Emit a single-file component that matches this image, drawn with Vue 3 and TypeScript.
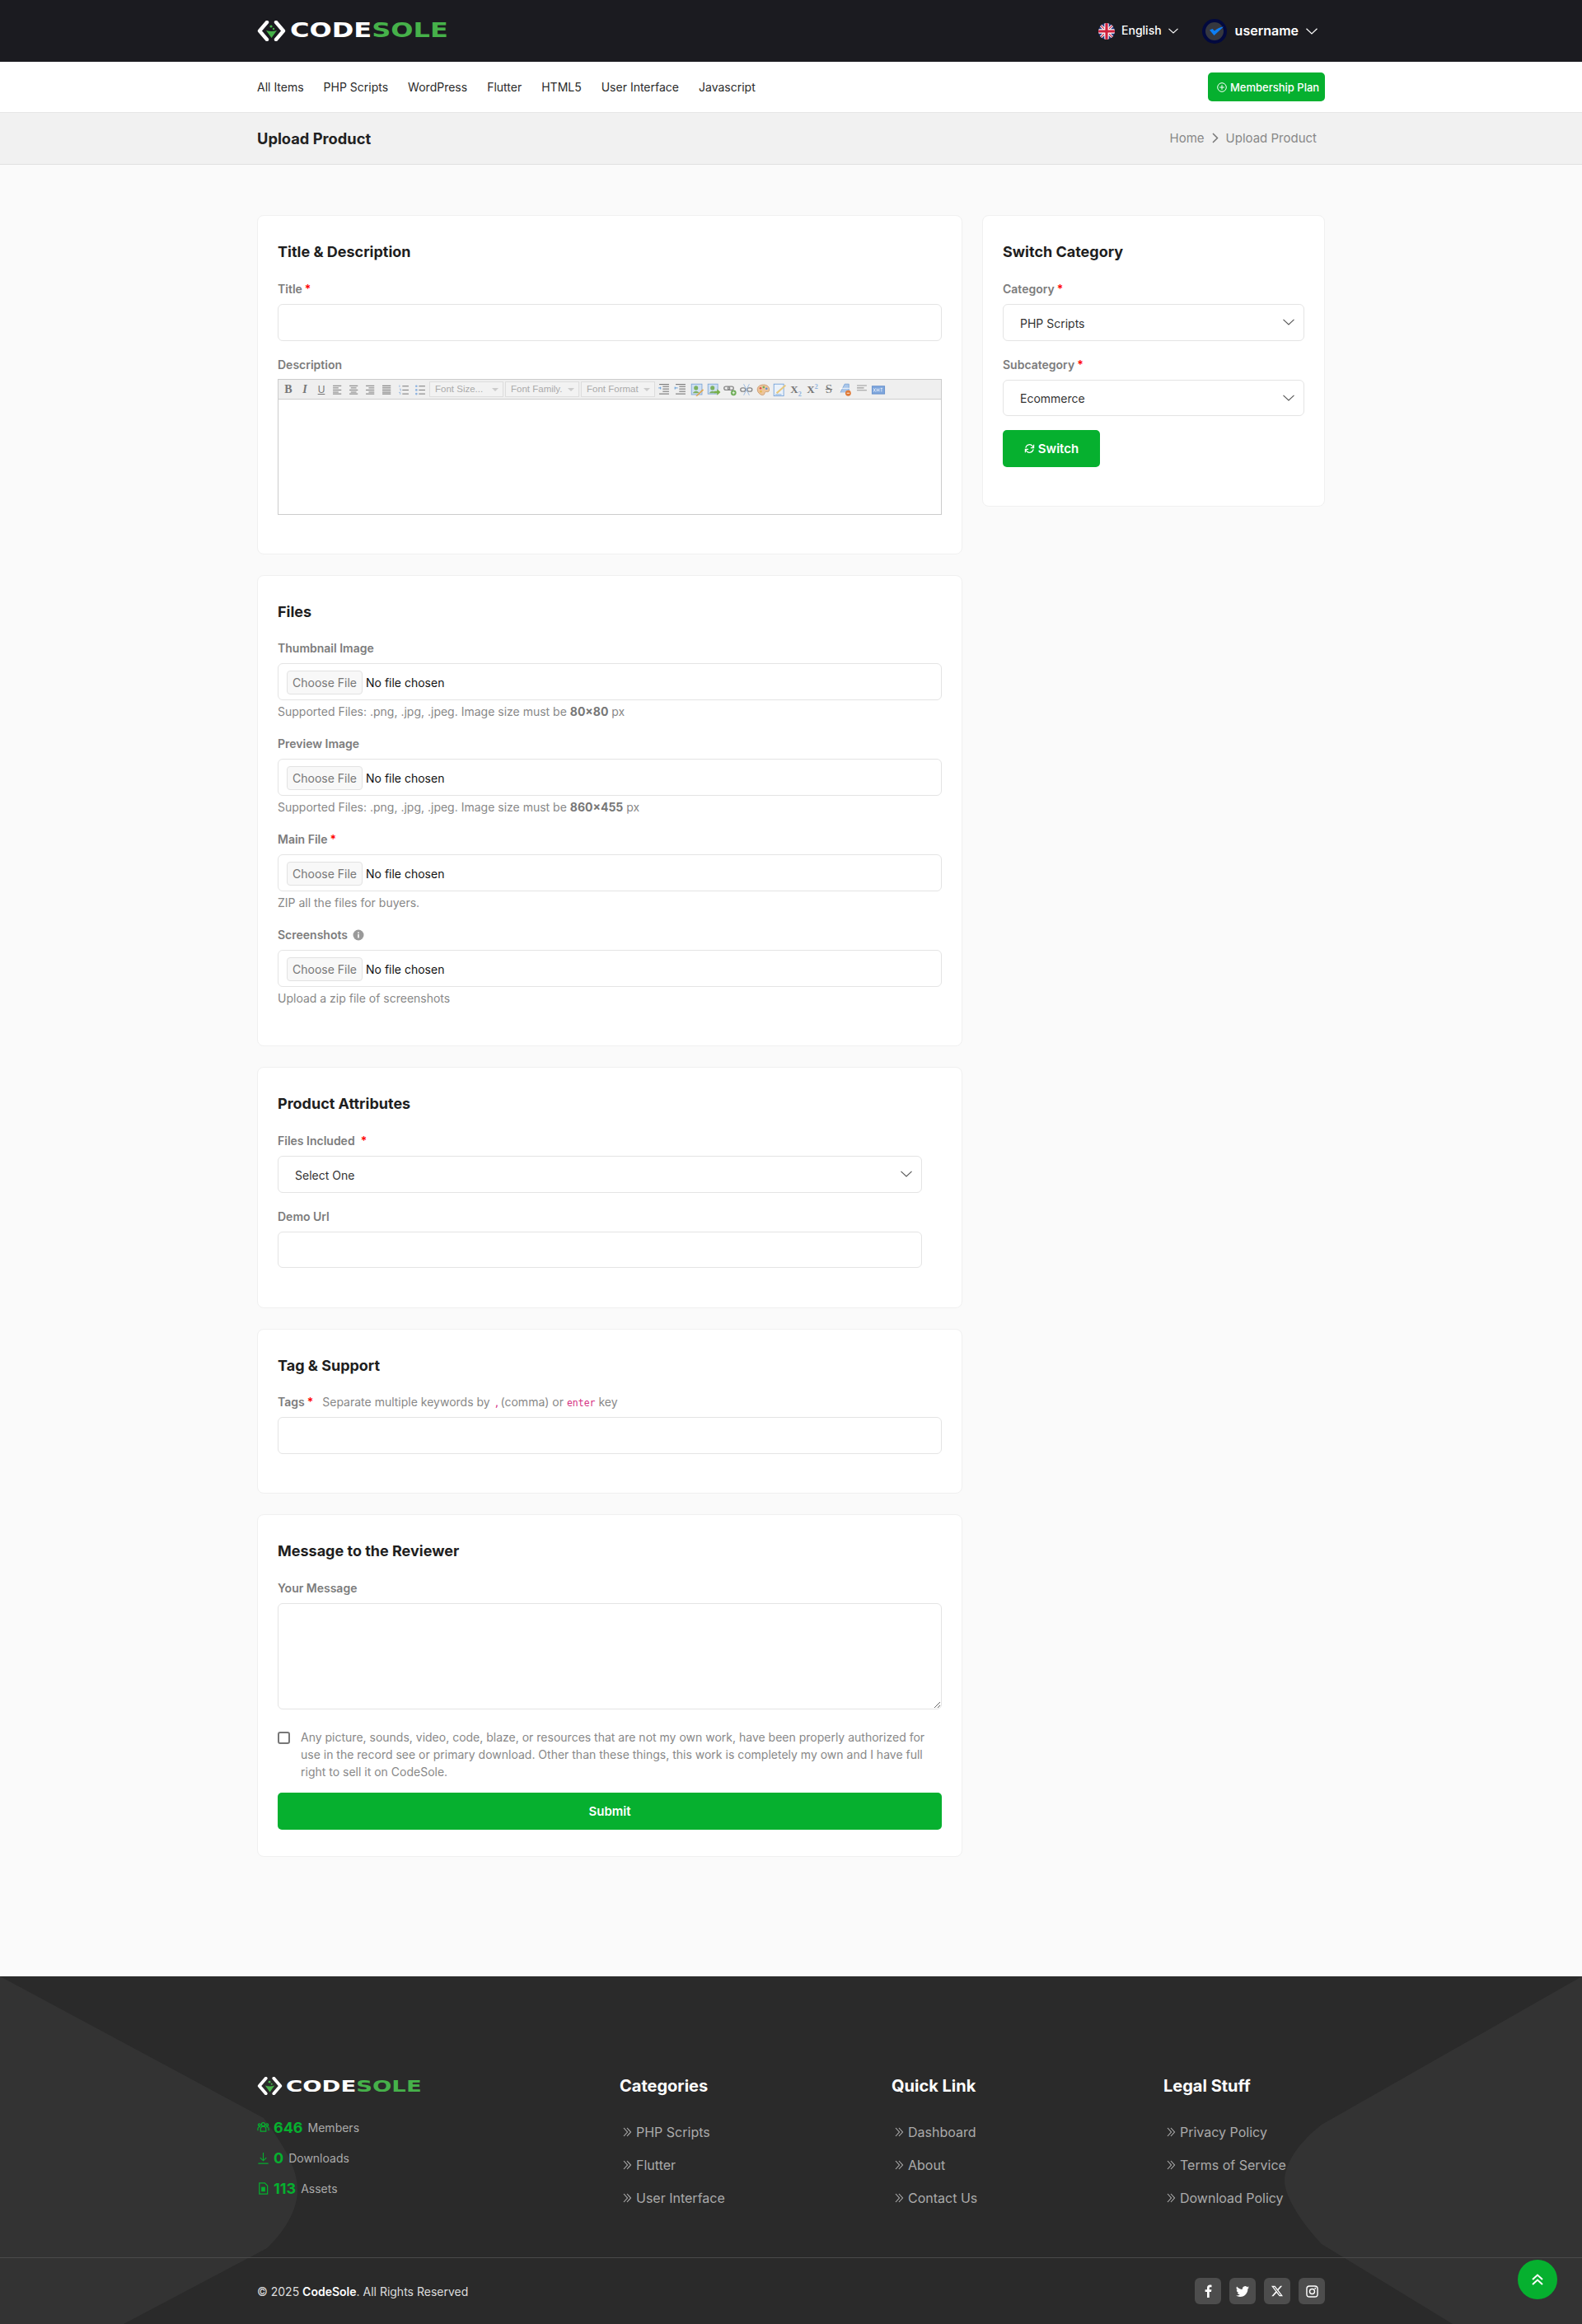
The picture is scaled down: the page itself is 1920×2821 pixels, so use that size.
<script setup lang="ts">
const navItems: string[] = ['All Items', 'PHP Scripts', 'WordPress', 'Flutter', 'HTML5', 'User Interface', 'Javascript']

interface FileField {
  label: string
  required?: boolean
  info?: boolean
  help: string
  bold?: string
  tail?: string
}
const fileFields: FileField[] = [
  { label: 'Thumbnail Image', help: 'Supported Files: .png, .jpg, .jpeg. Image size must be ', bold: '80×80', tail: ' px' },
  { label: 'Preview Image', help: 'Supported Files: .png, .jpg, .jpeg. Image size must be ', bold: '860×455', tail: ' px' },
  { label: 'Main File', required: true, help: 'ZIP all the files for buyers.' },
  { label: 'Screenshots', info: true, help: 'Upload a zip file of screenshots' },
]

const footerCols = [
  { title: 'Categories', links: ['PHP Scripts', 'Flutter', 'User Interface'] },
  { title: 'Quick Link', links: ['Dashboard', 'About', 'Contact Us'] },
  { title: 'Legal Stuff', links: ['Privacy Policy', 'Terms of Service', 'Download Policy'] },
]
</script>

<template>
  <div class="page">
    <header class="topbar">
      <div class="wrap topbar-in">
        <div class="logo">
          <svg class="logo-mark" viewBox="0 0 35 25" width="35" height="25">
            <path d="M12 2 L3 12.5 L12 23" fill="none" stroke="#fff" stroke-width="4.4" stroke-linejoin="round" stroke-linecap="round" />
            <path d="M23 2 L32 12.5 L23 23" fill="none" stroke="#fff" stroke-width="4.4" stroke-linejoin="round" stroke-linecap="round" />
            <path d="M11 12 Q17.5 14 24 12 L17.5 21 Z" fill="#46b14a" />
            <circle cx="17" cy="7" r="1.6" fill="#46b14a" />
            <circle cx="20" cy="10" r="1.2" fill="#46b14a" />
          </svg>
          <span class="logo-text"><span>CODE</span><span class="sole">SOLE</span></span>
        </div>
        <div class="top-right">
          <div class="lang">
            <svg class="flag" viewBox="0 0 20 20" width="20" height="20">
              <defs><clipPath id="flagclip"><circle cx="10" cy="10" r="10" /></clipPath></defs>
              <g clip-path="url(#flagclip)">
                <rect width="20" height="20" fill="#27387f" />
                <path d="M0 0 L20 20 M20 0 L0 20" stroke="#fff" stroke-width="3.2" />
                <path d="M0 0 L20 20 M20 0 L0 20" stroke="#cf1f3c" stroke-width="1.2" />
                <path d="M10 0 V20 M0 10 H20" stroke="#fff" stroke-width="5.4" />
                <path d="M10 0 V20 M0 10 H20" stroke="#cf1f3c" stroke-width="3.2" />
              </g>
            </svg>
            <span class="lang-text">English</span>
            <svg class="chev" viewBox="0 0 12 7" width="12" height="7"><path d="M.5.8 6 6 11.5.8" fill="none" stroke="#fff" stroke-width="1.1" /></svg>
          </div>
          <div class="user">
            <svg viewBox="0 0 30 30" width="30" height="30">
              <circle cx="15" cy="15" r="15" fill="#02093f" />
              <circle cx="15" cy="15" r="11" fill="#35373f" />
              <path d="M9 13.5 L14.5 20 L26 9.5 Q20 10 15 14.5 L12.5 12 Z" fill="#0d7ef5" />
            </svg>
            <span class="username">username</span>
            <svg class="chev" viewBox="0 0 14 8" width="14" height="8"><path d="M.5.8 7 7 13.5.8" fill="none" stroke="#fff" stroke-width="1.2" /></svg>
          </div>
        </div>
      </div>
    </header>

    <nav class="navbar">
      <div class="wrap navbar-in">
        <ul class="nav-list">
          <li v-for="n in navItems" :key="n">{{ n }}</li>
        </ul>
        <button class="plan-btn" type="button">
          <svg viewBox="0 0 12 12" width="12" height="12">
            <circle cx="6" cy="6" r="5.3" fill="none" stroke="#fff" stroke-width="1" />
            <path d="M6 3.2 V8.8 M3.2 6 H8.8" stroke="#fff" stroke-width="1" />
          </svg>
          <span>Membership Plan</span>
        </button>
      </div>
    </nav>

    <div class="crumbbar">
      <div class="wrap crumb-in">
        <h1 class="page-title">Upload Product</h1>
        <div class="crumbs">
          <span>Home</span>
          <svg viewBox="0 0 8 13" width="8" height="13"><path d="M1 1 L6.5 6.5 L1 12" fill="none" stroke="#777" stroke-width="1.5" /></svg>
          <span>Upload Product</span>
        </div>
      </div>
    </div>

    <main class="main">
      <div class="wrap layout">
        <div class="col-left">
          <section class="card c1">
            <h2 class="card-title">Title &amp; Description</h2>
            <div class="group">
              <label class="lbl">Title<i class="req">*</i></label>
              <input class="ctl" type="text" />
            </div>
            <div class="group">
              <label class="lbl">Description</label>
              <div class="editor">
                <div class="ed-bar">
                  <span class="t t-b">B</span>
                  <span class="t t-i">I</span>
                  <span class="t t-u">U</span>
                  <svg class="ico" viewBox="0 0 20 20"><path d="M3 4.5h12M3 7.5h8M3 10.5h12M3 13.5h8M3 16h12" stroke="#666" /></svg>
                  <svg class="ico" viewBox="0 0 20 20"><path d="M3 4.5h12M5 7.5h8M3 10.5h12M5 13.5h8M3 16h12" stroke="#666" /></svg>
                  <svg class="ico" viewBox="0 0 20 20"><path d="M3 4.5h12M7 7.5h8M3 10.5h12M7 13.5h8M3 16h12" stroke="#666" /></svg>
                  <svg class="ico" viewBox="0 0 20 20"><path d="M3 4.5h12M3 7.5h12M3 10.5h12M3 13.5h12M3 16h12" stroke="#555" /></svg>
                  <svg class="ico" viewBox="0 0 20 20"><path d="M8 5h9M8 10.5h9M8 16h9" stroke="#666" /><path d="M4 3.5v3M4 9h1.5v3M3 14h2v3" stroke="#8fb3e0" fill="none" /></svg>
                  <svg class="ico ico-last" viewBox="0 0 20 20"><path d="M8 5h9M8 10.5h9M8 16h9" stroke="#666" /><circle cx="4.5" cy="5" r="1.6" fill="#8fb3e0" /><circle cx="4.5" cy="10.5" r="1.6" fill="#8fb3e0" /><circle cx="4.5" cy="16" r="1.6" fill="#8fb3e0" /></svg>
                  <span class="ed-sel">Font Size...<b class="tri"></b></span>
                  <span class="ed-sel">Font Family.<b class="tri"></b></span>
                  <span class="ed-sel">Font Format<b class="tri"></b></span>
                  <svg class="ico ico-after" viewBox="0 0 20 20"><path d="M8 5.5h9M8 9h9M8 12.5h9M3 16h14M3 2.5h14" stroke="#555" /><path d="M2 7.5h3M5 6v3.5" stroke="#4a90d9" /></svg>
                  <svg class="ico" viewBox="0 0 20 20"><path d="M8 5.5h9M8 9h9M8 12.5h9M3 16h14M3 2.5h14" stroke="#555" /><path d="M2 7.5h4M2 6v3.5" stroke="#4a90d9" /></svg>
                  <svg class="ico" viewBox="0 0 20 20"><rect x="2" y="2" width="15" height="15" fill="#cfe0f3" stroke="#7aa3d4" /><circle cx="8.5" cy="7.5" r="3" fill="#7cb060" /><path d="M4 15c1-4 8-4 9 0z" fill="#7cb060" /><path d="M8 19 L18 9 L19.5 10.5 L10 19.5 Z" fill="#e0a64c" /></svg>
                  <svg class="ico" viewBox="0 0 20 20"><rect x="2" y="2" width="14" height="14" fill="#cfe0f3" stroke="#7aa3d4" /><circle cx="8.5" cy="7.5" r="3" fill="#7cb060" /><path d="M4 15c1-4 8-4 9 0z" fill="#7cb060" /><path d="M11 12h4V9l5 4.5-5 4.5v-3h-4z" fill="#78b04a" /></svg>
                  <svg class="ico" viewBox="0 0 20 20"><rect x="1.5" y="5.5" width="8" height="5" rx="2.5" fill="none" stroke="#888" stroke-width="1.6" /><rect x="7" y="5.5" width="8" height="5" rx="2.5" fill="none" stroke="#888" stroke-width="1.6" /><circle cx="15" cy="14.5" r="4" fill="#6fae5a" /><path d="M13 14.5h4M15 12.5v4" stroke="#fff" /></svg>
                  <svg class="ico" viewBox="0 0 20 20"><rect x="1.5" y="7.5" width="7" height="5" rx="2.5" fill="none" stroke="#888" stroke-width="1.6" /><rect x="11" y="7.5" width="7" height="5" rx="2.5" fill="none" stroke="#888" stroke-width="1.6" /><path d="M6 2l8 16M14 2L6 18" stroke="#8fb3e0" /></svg>
                  <svg class="ico" viewBox="0 0 20 20"><path d="M2 10C2 5 6 3 11 3s8 3 8 7-3 3-4.5 3-2 1.5-2.5 3-2 2-4 1.5S2 14 2 10z" fill="#edc49a" stroke="#c79a6e" /><circle cx="6.5" cy="8" r="1.5" fill="#d9534f" /><circle cx="11" cy="6.5" r="1.5" fill="#6fae5a" /><circle cx="15" cy="8.5" r="1.5" fill="#5b8fd9" /><circle cx="7" cy="12.5" r="1.5" fill="#e6b84c" /></svg>
                  <svg class="ico" viewBox="0 0 20 20"><rect x="2" y="2" width="14" height="17" fill="#eaf2fb" stroke="#6f9fd8" /><path d="M5 14 L18 3 L19.5 4.5 L7 16 Z" fill="#e7c77c" /><path d="M4 17h9" stroke="#6f9fd8" /></svg>
                  <span class="t t-sub">X<sub>2</sub></span>
                  <span class="t t-sub">X<sup>2</sup></span>
                  <span class="t t-s">S</span>
                  <svg class="ico" viewBox="0 0 20 20"><path d="M3 14 L9 2 L15 2 V14" fill="#a9c6ea" stroke="#7aa3d4" /><path d="M2 8h14" stroke="#fff" /><circle cx="14" cy="15" r="4" fill="#e07b39" /><path d="M12 15h4" stroke="#fff" /></svg>
                  <svg class="ico" viewBox="0 0 20 20"><path d="M3 4h14M3 7.5h10M3 11h14" stroke="#9a9a9a" stroke-width="1.2" /></svg>
                  <svg class="ico" viewBox="0 0 20 20"><rect x="1" y="5" width="18" height="11" fill="#7ea6dd" stroke="#5f8bc9" /><path d="M3 8l3 5M6 8l-3 5M8 8v5M11 8v5M8 10.5h3M13 8h3M14.5 8v5" stroke="#fff" stroke-width=".8" /></svg>
                </div>
                <div class="ed-body"></div>
              </div>
            </div>
          </section>

          <section class="card c2">
            <h2 class="card-title">Files</h2>
            <div v-for="f in fileFields" :key="f.label" class="group file-group">
              <label class="lbl">
                {{ f.label }}<i v-if="f.required" class="req">*</i>
                <svg v-if="f.info" class="info" viewBox="0 0 14 14" width="14" height="14">
                  <circle cx="7" cy="7" r="6.5" fill="#9a9a9a" />
                  <rect x="6.2" y="6" width="1.6" height="4.5" fill="#fff" />
                  <rect x="6.2" y="3.5" width="1.6" height="1.6" fill="#fff" />
                </svg>
              </label>
              <input class="ctl file-ctl" type="file" />
              <p class="help">{{ f.help }}<b v-if="f.bold">{{ f.bold }}</b>{{ f.tail }}</p>
            </div>
          </section>

          <section class="card c3">
            <h2 class="card-title">Product Attributes</h2>
            <div class="narrow">
              <div class="group">
                <label class="lbl">Files Included<i class="req wide">*</i></label>
                <div class="sel-wrap">
                  <select class="ctl sel"><option>Select One</option></select>
                  <svg class="sel-chev" viewBox="0 0 14 8" width="14" height="8"><path d="M.5.8 7 7 13.5.8" fill="none" stroke="#555" stroke-width="1.1" /></svg>
                </div>
              </div>
              <div class="group">
                <label class="lbl">Demo Url</label>
                <input class="ctl" type="text" />
              </div>
            </div>
          </section>

          <section class="card c4">
            <h2 class="card-title">Tag &amp; Support</h2>
            <div class="group">
              <label class="lbl">Tags<i class="req">*</i>
                <span class="tag-note">Separate multiple keywords by <code class="cm">,</code>(comma) or <code class="en">enter</code> key</span>
              </label>
              <input class="ctl" type="text" />
            </div>
          </section>

          <section class="card c5">
            <h2 class="card-title">Message to the Reviewer</h2>
            <div class="group">
              <label class="lbl">Your Message</label>
              <textarea class="ctl area"></textarea>
            </div>
            <label class="agree">
              <input class="chk" type="checkbox" />
              <span>Any picture, sounds, video, code, blaze, or resources that are not my own work, have been properly authorized for use in the record see or primary download. Other than these things, this work is completely my own and I have full right to sell it on CodeSole.</span>
            </label>
            <button class="submit" type="button">Submit</button>
          </section>
        </div>

        <aside class="col-right">
          <section class="card side">
            <h2 class="card-title">Switch Category</h2>
            <div class="group">
              <label class="lbl">Category<i class="req">*</i></label>
              <div class="sel-wrap">
                <select class="ctl sel"><option>PHP Scripts</option></select>
                <svg class="sel-chev" viewBox="0 0 14 8" width="14" height="8"><path d="M.5.8 7 7 13.5.8" fill="none" stroke="#555" stroke-width="1.1" /></svg>
              </div>
            </div>
            <div class="group last">
              <label class="lbl">Subcategory<i class="req">*</i></label>
              <div class="sel-wrap">
                <select class="ctl sel"><option>Ecommerce</option></select>
                <svg class="sel-chev" viewBox="0 0 14 8" width="14" height="8"><path d="M.5.8 7 7 13.5.8" fill="none" stroke="#555" stroke-width="1.1" /></svg>
              </div>
            </div>
            <button class="switch" type="button">
              <svg viewBox="0 0 14 14" width="13" height="13">
                <path d="M2 6a5 5 0 0 1 9-2l1 1.5M12 8a5 5 0 0 1-9 2L2 8.5" fill="none" stroke="#fff" stroke-width="1.3" />
                <path d="M12.5 2v4h-4M1.5 12V8h4" fill="none" stroke="#fff" stroke-width="1.3" />
              </svg>
              <span>Switch</span>
            </button>
          </section>
        </aside>
      </div>
    </main>

    <footer class="footer">
      <svg class="foot-bg" viewBox="0 0 1920 422" preserveAspectRatio="none">
        <path d="M0 0 L 320 172 C 352 215 362 240 361 262 C 360 285 345 310 324 330 L 150 422 L 0 422 Z" fill="#333333" />
        <path d="M1920 0 L 1604 180 C 1572 205 1559 230 1559 248 C 1559 270 1585 305 1604 325 L 1763 422 L 1920 422 Z" fill="#333333" />
      </svg>
      <div class="wrap foot-grid">
        <div class="foot-brand">
          <div class="logo logo-sm">
            <svg class="logo-mark" viewBox="0 0 35 25" width="31" height="22">
              <path d="M12 2 L3 12.5 L12 23" fill="none" stroke="#fff" stroke-width="4.4" stroke-linejoin="round" stroke-linecap="round" />
              <path d="M23 2 L32 12.5 L23 23" fill="none" stroke="#fff" stroke-width="4.4" stroke-linejoin="round" stroke-linecap="round" />
              <path d="M11 12 Q17.5 14 24 12 L17.5 21 Z" fill="#46b14a" />
              <circle cx="17" cy="7" r="1.6" fill="#46b14a" />
              <circle cx="20" cy="10" r="1.2" fill="#46b14a" />
            </svg>
            <span class="logo-text"><span>CODE</span><span class="sole">SOLE</span></span>
          </div>
          <ul class="stats">
            <li>
              <svg viewBox="0 0 16 16" width="15" height="15"><g fill="none" stroke="#06b02f" stroke-width="1.3"><circle cx="8" cy="4" r="2.2" /><path d="M4.5 13v-3a3.5 3.5 0 0 1 7 0v3zM1 12V9.5a2.5 2.5 0 0 1 3-2.4M15 12V9.5a2.5 2.5 0 0 0-3-2.4" /><circle cx="3" cy="4.5" r="1.5" /><circle cx="13" cy="4.5" r="1.5" /></g></svg>
              <b>646</b><span>Members</span>
            </li>
            <li>
              <svg viewBox="0 0 16 16" width="15" height="15"><path d="M8 1v10M4 7.5 8 11.5l4-4M1.5 15h13" fill="none" stroke="#06b02f" stroke-width="1.2" /></svg>
              <b>0</b><span>Downloads</span>
            </li>
            <li>
              <svg viewBox="0 0 16 16" width="15" height="15"><path d="M3 1h7l3.5 3.5V15H3z" fill="none" stroke="#06b02f" stroke-width="1.3" /><path d="M5.5 6h5v6h-5z" fill="#06b02f" /></svg>
              <b>113</b><span>Assets</span>
            </li>
          </ul>
        </div>
        <div v-for="c in footerCols" :key="c.title" class="foot-col">
          <h3>{{ c.title }}</h3>
          <ul>
            <li v-for="l in c.links" :key="l">
              <svg viewBox="0 0 11 12" width="11" height="12"><path d="M1 1 L5.5 6 L1 11 M5 1 L9.5 6 L5 11" fill="none" stroke="#b0b0b0" stroke-width="1.1" /></svg>
              <span>{{ l }}</span>
            </li>
          </ul>
        </div>
      </div>
      <div class="foot-bottom">
        <div class="wrap foot-bottom-in">
          <p class="copy">© 2025 <b>CodeSole</b>. All Rights Reserved</p>
          <div class="socials">
            <span class="soc"><svg viewBox="0 0 16 16" width="16" height="16"><path d="M9.7 16V9h2.3l.4-2.8H9.7V4.5c0-.8.3-1.3 1.4-1.3h1.4V.7C12.2.6 11.4.5 10.5.5 8.4.5 7 1.8 7 4.1v2.1H4.6V9H7v7z" fill="#fff" /></svg></span>
            <span class="soc"><svg viewBox="0 0 16 16" width="16" height="16"><path d="M5.026 15c6.038 0 9.341-5.003 9.341-9.334q.002-.211-.006-.422A6.7 6.7 0 0 0 16 3.542a6.7 6.7 0 0 1-1.889.518 3.3 3.3 0 0 0 1.447-1.817 6.5 6.5 0 0 1-2.087.793A3.286 3.286 0 0 0 7.875 6.03a9.32 9.32 0 0 1-6.767-3.429 3.29 3.29 0 0 0 1.018 4.382A3.3 3.3 0 0 1 .64 6.575v.045a3.29 3.29 0 0 0 2.632 3.218 3.2 3.2 0 0 1-.865.115 3 3 0 0 1-.614-.057 3.28 3.28 0 0 0 3.067 2.277A6.6 6.6 0 0 1 .78 13.58a6 6 0 0 1-.78-.045A9.34 9.34 0 0 0 5.026 15" fill="#fff" /></svg></span>
            <span class="soc"><svg viewBox="0 0 16 16" width="14" height="14"><path d="M12.6.75h2.454l-5.36 6.142L16 15.25h-4.937l-3.867-5.07-4.425 5.07H.316l5.733-6.57L0 .75h5.063l3.495 4.633L12.601.75Zm-.86 13.028h1.36L4.323 2.145H2.865z" fill="#fff" /></svg></span>
            <span class="soc"><svg viewBox="0 0 16 16" width="15" height="15"><rect x="1" y="1" width="14" height="14" rx="3.5" fill="none" stroke="#fff" stroke-width="1.5" /><circle cx="8" cy="8" r="3.2" fill="none" stroke="#fff" stroke-width="1.5" /><circle cx="12" cy="4" r="1" fill="#fff" /></svg></span>
          </div>
        </div>
      </div>
      <a class="to-top">
        <svg viewBox="0 0 16 16" width="16" height="16"><path d="M2 8 L8 2.5 L14 8 M2 14 L8 8.5 L14 14" fill="none" stroke="#fff" stroke-width="2" /></svg>
      </a>
    </footer>
  </div>
</template>

<style scoped>
.page { font-family: Inter, "Liberation Sans", sans-serif; color: #222; background: #fafafa; font-size: 14px; }
.wrap { width: 1296px; margin: 0 auto; }
ul { list-style: none; margin: 0; padding: 0; }
h1, h2, h3, p { margin: 0; }
i { font-style: normal; }

.topbar { background: #1b1b20; height: 75px; }
.topbar-in { height: 75px; display: flex; align-items: center; justify-content: space-between; }
.logo { display: flex; align-items: center; gap: 5px; }
.logo-mark { flex: none; }
.logo-text { display: inline-block; font-family: "DejaVu Sans", sans-serif; font-weight: 700; font-size: 24px; line-height: 25px; color: #fff; transform: scaleX(1.335); transform-origin: 0 50%; white-space: nowrap; }
.sole { color: #46b14a; }
.top-right { display: flex; align-items: center; }
.lang { display: flex; align-items: center; }
.lang-text { color: #fff; font-size: 14px; font-weight: 500; margin: 0 8px 2px; }
.user { display: flex; align-items: center; margin-left: 29px; margin-right: 9px; }
.username { color: #fff; font-size: 16px; font-weight: 600; margin: 0 9px 2px 10px; }

.navbar { background: #fff; height: 61px; }
.navbar-in { height: 61px; display: flex; align-items: center; justify-content: space-between; }
.nav-list { display: flex; gap: 24px; font-size: 14px; color: #2b2b2b; }
.plan-btn { display: flex; align-items: center; gap: 4px; height: 35px; width: 142px; padding: 0 0 0 11px; border: 0; border-radius: 5px; background: #06b02f; color: #fff; font: 500 13px Inter, sans-serif; }

.crumbbar { background: #f1f1f1; height: 64px; border-top: 1px solid #e6e6e6; border-bottom: 1px solid #e0e0e0; box-sizing: border-box; }
.crumb-in { height: 62px; display: flex; align-items: center; justify-content: space-between; }
.page-title { font-size: 18.3px; font-weight: 700; color: #222; margin-bottom: 1px; }
.crumbs { display: flex; align-items: center; gap: 9px; font-size: 15px; color: #888; margin: 0 10px 2px 0; }

.main { padding: 61px 0 145px; }
.layout { display: flex; gap: 24px; align-items: flex-start; }
.col-left { width: 856px; flex: none; display: flex; flex-direction: column; gap: 25px; }
.col-right { width: 416px; flex: none; }
.card { background: #fff; border: 1px solid #f0f0f0; border-radius: 8px; padding: 24px; box-sizing: border-box; }
.card-title { font-size: 18px; font-weight: 700; line-height: 40px; margin-bottom: 14px; color: #1e1e1e; }
.group { margin-bottom: 18px; }
.lbl { display: block; height: 22px; line-height: 22px; margin-bottom: 7px; font-size: 14px; font-weight: 600; color: #7c7c7c; }
.req { color: #f00; margin-left: 3px; }
.req.wide { margin-left: 7px; }
.ctl { display: block; width: 100%; height: 44.5px; box-sizing: border-box; border: 1px solid #e4e4e4; border-radius: 6px; background: #fff; font: 14px Inter, sans-serif; color: #333; outline: none; }

.editor { border: 1px solid #ccc; height: 165px; box-sizing: border-box; margin-top: -.5px; }
.ed-bar { height: 24px; box-sizing: border-box; background: #efefef; border-bottom: 1px solid #ccc; display: flex; align-items: center; padding-left: 2px; color: #888; }
.ed-body { height: 139px; background: #fff; }
.ico { width: 20px; height: 20px; flex: none; transform: scale(.85); }
.ico-last { margin-right: 1px; }
.ico-after { margin-left: -1px; }
.t { width: 20px; text-align: center; font-family: "Liberation Serif", serif; font-size: 14px; color: #777; flex: none; }
.t-b { font-weight: 700; }
.t-i { font-style: italic; font-weight: 700; }
.t-u { text-decoration: underline; font-family: "Liberation Sans", sans-serif; font-size: 12px; }
.t-s { text-decoration: line-through; font-size: 15px; }
.t-sub { font-weight: 700; font-size: 13px; }
.t-sub sub, .t-sub sup { font-size: 8px; color: #8fb3e0; line-height: 0; }
.ed-sel { position: relative; flex: none; height: 19px; box-sizing: border-box; border: 1px solid #ddd; background: #f2f2f2; font: 11.5px/17px "Liberation Sans", sans-serif; color: #aaa; padding-left: 6px; margin-right: 2px; width: 90px; }
.tri { position: absolute; right: 5px; top: 7px; width: 0; height: 0; border-left: 4px solid transparent; border-right: 4px solid transparent; border-top: 4px solid #ccc; }

.c1 .group:last-child { margin-bottom: 23px; }
.c2 .card-title { margin-bottom: 13px; }
.file-ctl { padding: 2px 10px 0; line-height: 41px; color: #111; }
.file-ctl::file-selector-button { height: 29px; padding: 0 6px; margin-right: 4px; border: 1px solid #e2e2e2; border-radius: 4px; background: #f8f8f8; color: #777; font: 14px Inter, sans-serif; }
.help { margin-top: 3px; font-size: 14px; line-height: 21px; color: #888; }
.help b { font-weight: 700; color: #777; }
.file-group { margin-bottom: 18.5px; }
.file-group:last-child { margin-bottom: 23.5px; }
.info { vertical-align: -2px; margin-left: 6px; }

.narrow { width: 782px; }
.sel-wrap { position: relative; }
.sel { appearance: none; -webkit-appearance: none; padding: 2px 40px 0 20px; color: #333; }
.sel-chev { position: absolute; right: 12px; top: 18px; pointer-events: none; }
.c3 .group:last-child { margin-bottom: 24px; }
.c4 .card-title { margin-bottom: 13px; }
.c4 .group { margin-bottom: 23.5px; }
.tag-note { font-weight: 400; color: #888; margin-left: 11px; }
.cm, .en { font-family: "DejaVu Sans Mono", "Liberation Mono", monospace; color: #d63384; font-size: 11.5px; }
.cm { margin: 0 1px; }

.area { height: 129px; resize: vertical; }
.c5 .group { margin-bottom: 23px; }
.agree { display: flex; gap: 13px; font-size: 14px; line-height: 21px; color: #888; margin-bottom: 15px; }
.chk { appearance: none; -webkit-appearance: none; flex: none; width: 15px; height: 15px; margin: 4px 0 0; border: 2px solid #777; border-radius: 3px; background: #fff; box-sizing: border-box; }
.submit { display: block; width: 100%; height: 45px; border: 0; border-radius: 5px; background: #06b02f; color: #fff; font: 600 15px Inter, sans-serif; }
.c5 { padding-bottom: 32px; }

.side { height: 354px; }
.side .group.last { margin-bottom: 17px; }
.switch { display: flex; align-items: center; justify-content: center; gap: 4px; width: 118px; height: 44.5px; border: 0; border-radius: 5px; background: #06b02f; color: #fff; font: 600 15px Inter, sans-serif; }

.footer { position: relative; background: #2a2a2a; height: 422px; overflow: hidden; }
.foot-bg { position: absolute; left: 0; top: 0; width: 1920px; height: 422px; }
.foot-grid { position: relative; display: grid; grid-template-columns: 440px 330px 330px 1fr; height: 341px; padding-top: 121px; box-sizing: border-box; }
.logo-sm { gap: 4px; height: 24px; }
.logo-sm .logo-text { font-size: 20px; line-height: 22px; transform: scaleX(1.375); }
.stats { margin-top: 20px; }
.stats li { display: flex; align-items: center; height: 37px; gap: 5px; color: #aaa; font-size: 14px; }
.stats b { color: #06b02f; font-size: 18px; font-weight: 700; margin-right: 1px; }
.foot-col h3 { color: #fff; font-size: 20px; font-weight: 700; line-height: 24px; margin-bottom: 24px; }
.foot-col li { display: flex; align-items: center; height: 40px; gap: 5px; padding-left: 4px; color: #aaa; font-size: 16px; }
.foot-bottom { position: relative; border-top: 1px solid #4a4a4a; height: 81px; box-sizing: border-box; }
.foot-bottom-in { height: 80px; display: flex; align-items: center; justify-content: space-between; }
.copy { color: #ddd; font-size: 14px; }
.copy b { color: #fff; font-weight: 600; }
.socials { display: flex; gap: 10px; }
.soc { width: 32px; height: 32px; border-radius: 6px; background: #4d4d4d; display: flex; align-items: center; justify-content: center; }
.to-top { position: absolute; right: 30px; top: 344px; width: 48px; height: 48px; border-radius: 50%; background: #06b02f; display: flex; align-items: center; justify-content: center; }
</style>
